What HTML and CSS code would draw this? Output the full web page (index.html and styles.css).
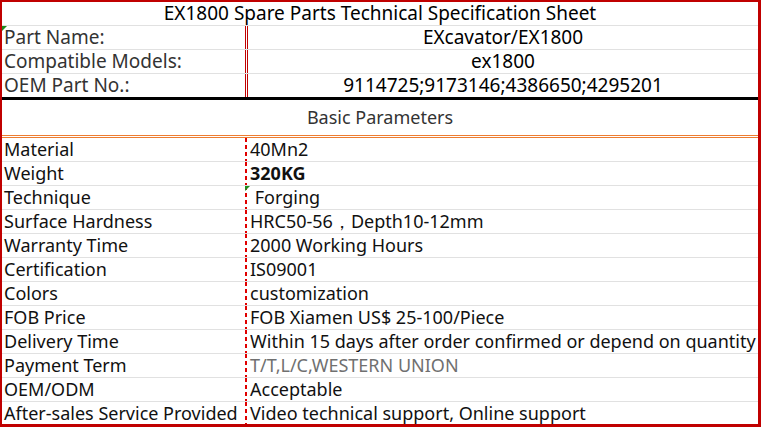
FILE: index.html
```html
<!DOCTYPE html>
<html lang="en">
<head>
  <meta charset="UTF-8">
  <title>EX1800 Spare Parts Technical Specification Sheet</title>
  <link rel="stylesheet" href="styles.css">
</head>
<body>
  <div class="sheet">
    <!-- Header block -->
    <div class="title">EX1800 Spare Parts Technical Specification Sheet</div>
    <div class="head-row">
      <div class="label flag">Part Name:</div>
      <div class="value">EXcavator/EX1800</div>
    </div>
    <div class="head-row">
      <div class="label">Compatible Models:</div>
      <div class="value">ex1800</div>
    </div>
    <div class="head-row last">
      <div class="label">OEM Part No.:</div>
      <div class="value">9114725;9173146;4386650;4295201</div>
    </div>

    <div class="section">Basic Parameters</div>

    <!-- Parameter rows -->
    <div class="row"><div class="label">Material</div><div class="value">40Mn2</div></div>
    <div class="row"><div class="label">Weight</div><div class="value bold">320KG</div></div>
    <div class="row"><div class="label">Technique</div><div class="value flag">&nbsp;Forging</div></div>
    <div class="row"><div class="label">Surface Hardness</div><div class="value">HRC50-56，Depth10-12mm</div></div>
    <div class="row"><div class="label">Warranty Time</div><div class="value">2000 Working Hours</div></div>
    <div class="row"><div class="label">Certification</div><div class="value">IS09001</div></div>
    <div class="row"><div class="label">Colors</div><div class="value">customization</div></div>
    <div class="row"><div class="label">FOB Price</div><div class="value">FOB Xiamen US$ 25-100/Piece</div></div>
    <div class="row"><div class="label">Delivery Time</div><div class="value">Within 15 days after order confirmed or depend on quantity</div></div>
    <div class="row"><div class="label">Payment Term</div><div class="value muted">T/T,L/C,WESTERN UNION</div></div>
    <div class="row"><div class="label">OEM/ODM</div><div class="value">Acceptable</div></div>
    <div class="row end"><div class="label">After-sales Service Provided</div><div class="value">Video technical support, Online support</div></div>
  </div>
</body>
</html>
```

FILE: styles.css
```css
:root {
  --frame: #c00000;
  --grid-line: #e1e1e1;
  --text: #111111;
  --label: #333333;
  --orange: #ed7d31;
}

* {
  margin: 0;
  padding: 0;
  box-sizing: border-box;
}

body {
  font-family: 'Noto Sans', 'Open Sans', sans-serif;
  font-size: 18px;
  color: var(--text);
  background: #fff;
}

.sheet {
  width: 761px;
  height: 427px;
  border-top: 2px solid var(--frame);
  border-left: 2px solid var(--frame);
  border-right: 3px solid var(--frame);
  border-bottom: 3px solid var(--frame);
  overflow: hidden;
}

/* top block is set a size larger than the parameter list */
.title,
.head-row {
  font-size: 19px;
}

.title {
  height: 24px;
  line-height: 23px;
  text-align: center;
  color: #000;
  border-bottom: 1px solid var(--grid-line);
}

.head-row {
  display: grid;
  grid-template-columns: 246px 1fr;
  height: 24px;
  line-height: 23px;
  border-bottom: 1px solid var(--grid-line);
}

.head-row.last {
  border-bottom: 3px solid #000;
  height: 26px;
}

.head-row .label {
  padding-left: 2px;
  color: var(--label);
  border-right: 3px double var(--frame);
}

.head-row .value {
  text-align: center;
  color: #000;
}

.section {
  height: 38px;
  line-height: 35px;
  text-align: center;
  color: var(--label);
  border-bottom: 3px double var(--orange);
}

.row {
  display: grid;
  grid-template-columns: 243px 1fr;
  height: 24px;
  line-height: 23px;
  border-bottom: 1px solid var(--grid-line);
}

.row.end {
  border-bottom: none;
}

.row .label {
  padding-left: 2px;
  white-space: nowrap;
}

.row .value {
  padding-left: 5px;
  white-space: nowrap;
  background: repeating-linear-gradient(to bottom, #e00000 0 4px, transparent 4px 7px) left top / 2px 100% no-repeat;
}

.bold {
  font-weight: 700;
}

.muted {
  color: #707070;
}

/* little green error markers, as in the spreadsheet */
.flag {
  position: relative;
}

.flag::before {
  content: "";
  position: absolute;
  left: 0;
  top: 0;
  border-top: 5px solid #1e8a1e;
  border-right: 5px solid transparent;
}
```
